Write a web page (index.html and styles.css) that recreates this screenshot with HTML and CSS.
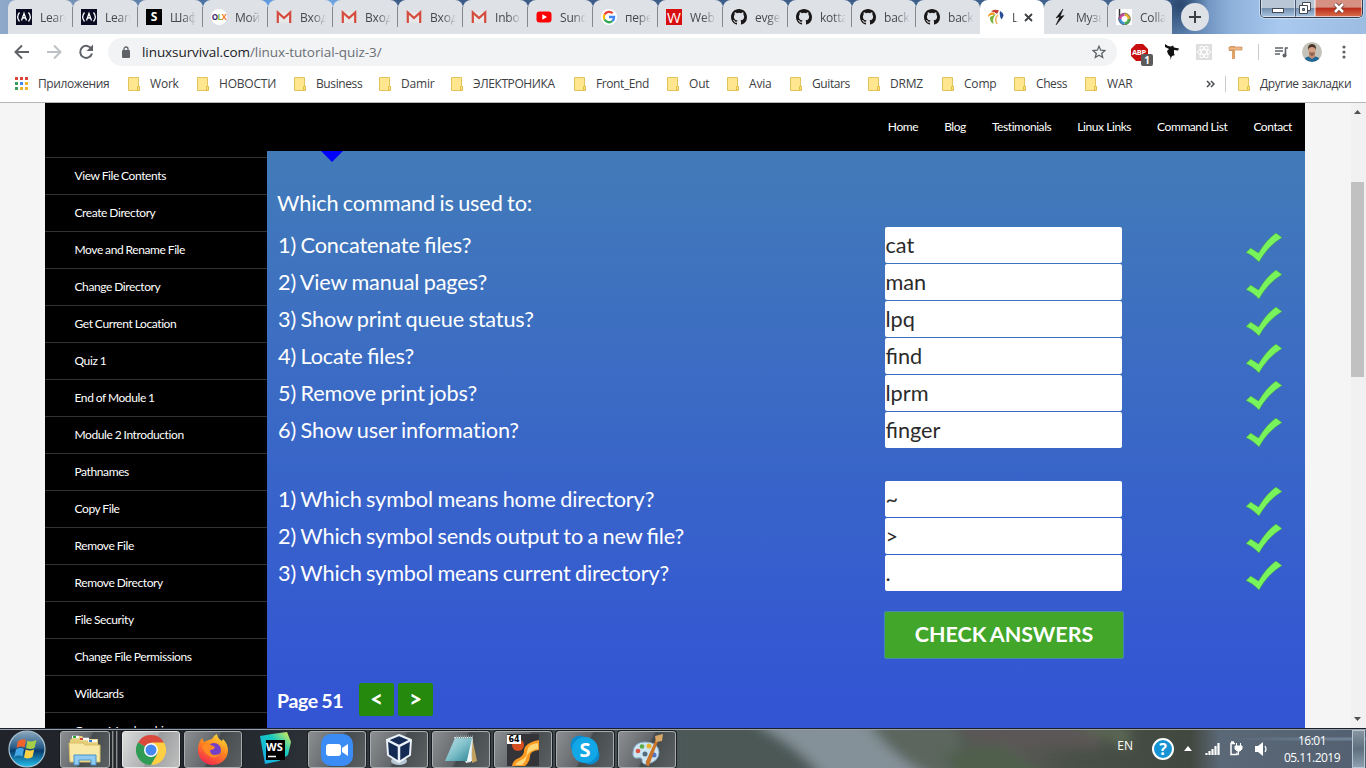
FILE: index.html
```html
<!DOCTYPE html>
<html lang="ru">
<head>
<meta charset="utf-8">
<title>Linux Survival</title>
<link rel="stylesheet" href="styles.css">
</head>
<body>
<svg width="0" height="0" class="defs">
  <defs>
    <linearGradient id="ff" x1="0.8" y1="0" x2="0.3" y2="1"><stop offset="0" stop-color="#ffdf3a"/><stop offset=".45" stop-color="#ff8a1e"/><stop offset="1" stop-color="#f5264f"/></linearGradient>
    <linearGradient id="orb" x1="0" y1="0" x2="0" y2="1"><stop offset="0" stop-color="#8fa9bd"/><stop offset=".45" stop-color="#2a5e8b"/><stop offset=".55" stop-color="#073b6c"/><stop offset="1" stop-color="#25c2ef"/></linearGradient>
    <linearGradient id="note" x1="0" y1="0" x2="1" y2="1"><stop offset="0" stop-color="#bfe3e8"/><stop offset=".5" stop-color="#7fc0ca"/><stop offset="1" stop-color="#2b8593"/></linearGradient>
    <linearGradient id="ws" x1="0" y1="1" x2="1" y2="0"><stop offset="0" stop-color="#18a8e8"/><stop offset=".6" stop-color="#14c9c2"/><stop offset="1" stop-color="#eaf04c"/></linearGradient>
    <filter id="soft" x="-20%" y="-50%" width="140%" height="200%"><feGaussianBlur stdDeviation="6"/></filter>
    <symbol id="fcc" viewBox="0 0 16 16"><rect width="16" height="16" fill="#0a0a23"/><path d="M3.500 3.500Q-.2 8 3.500 12.500M12.500 3.500Q16.200 8 12.500 12.500M5.500 11.500 8 4.500l2.500 7M8 8v2" fill="none" stroke="#fff" stroke-width="1.300"/></symbol>
    <symbol id="gmail" viewBox="0 0 16 16"><path d="M1 3h14v10.500H1z" fill="#e8e8e8"/><path d="M1.800 14V3.500L8 9l6.200-5.500V14" fill="none" stroke="#d54b3d" stroke-width="2.200"/></symbol>
    <symbol id="github" viewBox="0 0 16 16"><path fill="#191717" d="M8 0C3.580 0 0 3.580 0 8c0 3.540 2.290 6.530 5.470 7.590.4.070.55-.17.55-.38 0-.19-.01-.82-.01-1.490-2.010.37-2.530-.49-2.690-.94-.09-.23-.48-.94-.82-1.130-.28-.15-.68-.52-.01-.53.63-.01 1.080.58 1.230.82.72 1.210 1.870.87 2.330.66.07-.52.28-.87.51-1.070-1.780-.2-3.640-.89-3.640-3.950 0-.87.31-1.590.82-2.150-.08-.2-.36-1.020.08-2.120 0 0 .67-.21 2.200.82a7.600 7.600 0 0 1 4 0c1.530-1.040 2.200-.82 2.200-.82.44 1.100.16 1.920.08 2.120.51.56.82 1.270.82 2.150 0 3.070-1.870 3.750-3.650 3.950.29.25.54.73.54 1.480 0 1.070-.01 1.930-.01 2.200 0 .21.15.46.55.38A8 8 0 0 0 16 8c0-4.420-3.580-8-8-8z"/></symbol>
    <symbol id="folder" viewBox="0 0 12 14"><path d="M.5.500h10v9h1v4H.500z" fill="#ffe68f" stroke="#e3c35b"/><path d="M9.500 13v-3.500h2V13z" fill="#ffe68f" stroke="#e3bd45"/></symbol>
    <symbol id="check" viewBox="0 0 36 29"><path d="M0 19.500 4.700 15 12.500 20Q20 7 30 0l6 4.500Q22 13 13 29Q7 22.500 0 19.500z" fill="#79f35b" stroke="#3f9b43" stroke-width=".5"/></symbol>
  </defs>
</svg>

<header class="tabstrip">
  <div class="tab"><svg class="fav"><use href="#fcc"/></svg><span>Learn</span></div>
  <div class="tab"><svg class="fav"><use href="#fcc"/></svg><span>Learn</span></div>
  <div class="tab"><b class="fav fav-s">S</b><span>Шаф</span></div>
  <div class="tab"><b class="fav fav-olx"><i>O</i><em>L</em><u>X</u></b><span>Мой</span></div>
  <div class="tab"><svg class="fav"><use href="#gmail"/></svg><span>Вход</span></div>
  <div class="tab"><svg class="fav"><use href="#gmail"/></svg><span>Вход</span></div>
  <div class="tab"><svg class="fav"><use href="#gmail"/></svg><span>Вход</span></div>
  <div class="tab"><svg class="fav"><use href="#gmail"/></svg><span>Inbo</span></div>
  <div class="tab"><svg class="fav" viewBox="0 0 16 16"><rect y="2.500" x=".5" width="15" height="11" rx="3" fill="#f00"/><path d="M6.300 5.300v5.400L11 8z" fill="#fff"/></svg><span>Sund</span></div>
  <div class="tab"><svg class="fav" viewBox="0 0 16 16"><circle cx="8" cy="8" r="8" fill="#fff"/><g fill="none" stroke-width="2.300"><path d="M11.700 4.300A5.200 5.200 0 0 0 3.500 5.500" stroke="#ea4335"/><path d="M3.500 5.500a5.200 5.200 0 0 0 0 5" stroke="#fbbc05"/><path d="M3.500 10.500a5.200 5.200 0 0 0 7.800 1.600" stroke="#34a853"/><path d="M11.300 12.100A5 5 0 0 0 13.100 8H8" stroke="#4285f4"/></g></svg><span>пере</span></div>
  <div class="tab"><b class="fav fav-w">W</b><span>Web</span></div>
  <div class="tab"><svg class="fav"><use href="#github"/></svg><span>evge</span></div>
  <div class="tab narrow"><svg class="fav"><use href="#github"/></svg><span>kotta</span></div>
  <div class="tab narrow"><svg class="fav"><use href="#github"/></svg><span>back</span></div>
  <div class="tab narrow last"><svg class="fav"><use href="#github"/></svg><span>back</span></div>
  <div class="tab narrow active"><svg class="fav" viewBox="0 0 16 16"><path d="M0 8Q0 3 6 3.500L7 6Q3 5 0 8" fill="#f29b23"/><path d="M3 2.500Q6-.5 11 1.500L9 5Q7 2.500 3 2.500" fill="#c53b31"/><path d="M12 2q6 3 1.500 8.500Q11 7 12 2" fill="#294f9b"/><path d="M2 8l6-3q-4 4-2.500 10Q1.500 13 2 8" fill="#7ab43c"/><path d="M9 15q-3-6 1-9" fill="none" stroke="#efb25c" stroke-width="1.500"/></svg><span>L</span><svg class="close" viewBox="0 0 9 9"><path d="M1 1l7 7M8 1 1 8" stroke="#3c4043" stroke-width="1.800"/></svg></div>
  <div class="tab narrow"><svg class="fav" viewBox="0 0 16 16"><path d="M11 0 4 9l4-1.500L4 16l8-9.500-4 1z" fill="#111" stroke="#111" stroke-width=".5"/></svg><span>Музы</span></div>
  <div class="tab narrow last"><svg class="fav" viewBox="0 0 16 16"><rect width="16" height="16" fill="#fff"/><path d="M3.500 0v10" stroke="#333" stroke-width="1.500"/><g fill="none" stroke-width="3"><path d="M8.500 5.500a4.500 4.500 0 0 1 4.500 4.500" stroke="#e7b32d"/><path d="M13 10a4.500 4.500 0 0 1-4.500 4.500" stroke="#48b14e"/><path d="M8.500 14.500A4.500 4.500 0 0 1 4 10" stroke="#3d8fd4"/><path d="M4 10a4.500 4.500 0 0 1 4.500-4.500" stroke="#c64a9d"/></g><circle cx="8.500" cy="10" r="5.800" fill="none" stroke="#555" stroke-width=".7"/></svg><span>Colla</span></div>
  <div class="newtab"><svg width="12" height="12" viewBox="0 0 12 12"><path d="M6 0v12M0 6h12" stroke="#3c4043" stroke-width="2"/></svg></div>
  <div class="winbtns">
    <div class="min"><svg width="12" height="5"><rect x=".5" y=".5" width="11" height="4" fill="#fff" stroke="#434a55"/></svg></div>
    <div class="max"><svg width="12" height="12" viewBox="0 0 12 12"><path d="M3.500.500h8v8h-8z" fill="#fff" stroke="#434a55"/><path d="M.5 3.500h8v8h-8z" fill="#fff" stroke="#434a55"/><path d="M3.500 6.500h2v2h-2z" fill="#8da5c2" stroke="#434a55"/></svg></div>
    <div class="cls"><svg width="14" height="12"><path d="M3 2l8 8M11 2l-8 8" stroke="#6a302c" stroke-width="4.200"/><path d="M3 2l8 8M11 2l-8 8" stroke="#fff" stroke-width="2.600"/></svg></div>
  </div>
</header>

<nav class="toolbar">
  <svg class="nav" viewBox="0 0 16 16"><path d="M15 8H2M8 1.500 1.500 8 8 14.500" fill="none" stroke="#5f6368" stroke-width="2"/></svg>
  <svg class="nav" viewBox="0 0 16 16"><path d="M1 8h13M8 1.500 14.500 8 8 14.500" fill="none" stroke="#bdc1c6" stroke-width="2"/></svg>
  <svg class="nav" viewBox="0 0 16 16"><path d="M13.500 5A6 6 0 1 0 14 9.500" fill="none" stroke="#5f6368" stroke-width="2"/><path d="M15 .5V7H8.500z" fill="#5f6368"/></svg>
  <div class="omnibox">
    <svg width="8" height="12" viewBox="0 0 8 12"><rect y="4" width="8" height="8" rx="1" fill="#5f6368"/><path d="M2 5V3a2 2 0 0 1 4 0v2" fill="none" stroke="#5f6368" stroke-width="1.300"/></svg>
    <p class="url"><b>linuxsurvival.com</b>/linux-tutorial-quiz-3/</p>
    <svg width="14" height="14" viewBox="0 0 14 14"><path d="M7 1.300 8.700 5.200l4.200.4-3.200 2.800 1 4.100L7 10.300l-3.700 2.200 1-4.100L1.100 5.600l4.200-.4z" fill="none" stroke="#5f6368" stroke-width="1.300"/></svg>
  </div>
  <div class="ext abp"><svg width="17" height="17" viewBox="0 0 17 17"><path d="M5 0h7l5 5v7l-5 5H5l-5-5V5z" fill="#c70d0d"/></svg><b>ABP</b><span>1</span></div>
  <svg class="ext cat" viewBox="0 0 16 16"><path d="M1 0l3 2 3 .5 2-1 1 2 5 1-1 2-4-.5v4l1 1-3 1-2 4H6l.5-3L4 10 3 7 5 5 1 3z" fill="#111"/></svg>
  <svg class="ext react" viewBox="0 0 16 16"><rect width="16" height="16" fill="#dedede"/><g fill="none" stroke="#fff"><ellipse cx="8" cy="8" rx="6.500" ry="2.500"/><ellipse cx="8" cy="8" rx="6.500" ry="2.500" transform="rotate(60 8 8)"/><ellipse cx="8" cy="8" rx="6.500" ry="2.500" transform="rotate(120 8 8)"/></g></svg>
  <svg class="ext" viewBox="0 0 16 16"><path d="M3 2h4v13H4V7H1V3z" fill="#dfa269"/><path d="M1 3h13v3H1z" fill="#eeb986" stroke="#c17e47" stroke-width=".6"/></svg>
  <i class="vline"></i>
  <svg class="media" viewBox="0 0 14 12"><path d="M0 2h8M0 5h8M0 8h5M10.500 10V2H13" fill="none" stroke="#5f6368" stroke-width="1.600"/><circle cx="9.500" cy="9.500" r="2" fill="#5f6368"/></svg>
  <svg class="avatar" viewBox="0 0 20 20"><clipPath id="av"><circle cx="10" cy="10" r="10"/></clipPath><g clip-path="url(#av)"><path d="M0 0h20v20H0z" fill="#c5c2b9"/><path d="M1 20q1-6 9-6t9 6" fill="#216797"/><path d="M7 11h6v4l-3 2-3-2z" fill="#c68b73"/><ellipse cx="10" cy="8" rx="3.700" ry="5" fill="#d4a084"/><path d="M6 8q-.5-6 4-6t4 6q-1-3-4-3T6 8" fill="#4a3328"/><path d="M7 10q3 1 6 0-1 4-3 4t-3-4" fill="#8e634f"/></g></svg>
  <svg class="kebab" viewBox="0 0 4 14"><g fill="#5f6368"><circle cx="2" cy="2" r="1.600"/><circle cx="2" cy="7" r="1.600"/><circle cx="2" cy="12" r="1.600"/></g></svg>
</nav>

<nav class="bookmarks">
  <a class="apps cyr"><svg width="13" height="13" viewBox="0 0 13 13"><path d="M0 0h3v3H0zM5 0h3v3H5zM10 0h3v3h-3z" fill="#db4437"/><path d="M0 5h3v3H0zM0 10h3v3H0z" fill="#3a9e5d"/><path d="M5 5h3v3H5z" fill="#4285f4"/><path d="M10 5h3v3h-3zM5 10h3v3H5zM10 10h3v3h-3z" fill="#eeb42c"/></svg>Приложения</a>
  <a><svg class="fold"><use href="#folder"/></svg>Work</a>
  <a><svg class="fold"><use href="#folder"/></svg>НОВОСТИ</a>
  <a class="cyr"><svg class="fold"><use href="#folder"/></svg>Business</a>
  <a><svg class="fold"><use href="#folder"/></svg>Damir</a>
  <a class="cyr"><svg class="fold"><use href="#folder"/></svg>ЭЛЕКТРОНИКА</a>
  <a class="cyr"><svg class="fold"><use href="#folder"/></svg>Front_End</a>
  <a><svg class="fold"><use href="#folder"/></svg>Out</a>
  <a><svg class="fold"><use href="#folder"/></svg>Avia</a>
  <a class="cyr"><svg class="fold"><use href="#folder"/></svg>Guitars</a>
  <a><svg class="fold"><use href="#folder"/></svg>DRMZ</a>
  <a><svg class="fold"><use href="#folder"/></svg>Comp</a>
  <a class="cyr"><svg class="fold"><use href="#folder"/></svg>Chess</a>
  <a><svg class="fold"><use href="#folder"/></svg>WAR</a>
  <svg width="9" height="8" viewBox="0 0 9 8"><path d="M1 1l3 3-3 3M5 1l3 3-3 3" fill="none" stroke="#4a4d51" stroke-width="1.500"/></svg>
  <i class="vline"></i>
  <a class="cyr"><svg class="fold"><use href="#folder"/></svg>Другие закладки</a>
</nav>

<div class="viewport">
  <div class="site">
    <div class="topnav"><a>Home</a><a>Blog</a><a>Testimonials</a><a>Linux Links</a><a>Command List</a><a>Contact</a></div>
    <div class="body">
      <aside>
        <a>View File Contents</a><a>Create Directory</a><a>Move and Rename File</a><a>Change Directory</a><a>Get Current Location</a><a>Quiz 1</a><a>End of Module 1</a><a>Module 2 Introduction</a><a>Pathnames</a><a>Copy File</a><a>Remove File</a><a>Remove Directory</a><a>File Security</a><a>Change File Permissions</a><a>Wildcards</a><a>Group Membership</a>
      </aside>
      <main>
        <svg class="marker" width="22" height="11"><path d="M0 0h22L11 11z" fill="#00f"/></svg>
        <p class="lead">Which command is used to:</p>
        <div class="group">
          <div class="row"><span>1) Concatenate files?</span><div class="field">cat</div><svg class="check"><use href="#check"/></svg></div>
          <div class="row"><span>2) View manual pages?</span><div class="field">man</div><svg class="check"><use href="#check"/></svg></div>
          <div class="row"><span>3) Show print queue status?</span><div class="field">lpq</div><svg class="check"><use href="#check"/></svg></div>
          <div class="row"><span>4) Locate files?</span><div class="field">find</div><svg class="check"><use href="#check"/></svg></div>
          <div class="row"><span>5) Remove print jobs?</span><div class="field">lprm</div><svg class="check"><use href="#check"/></svg></div>
          <div class="row"><span class="plain">6) Show user information?</span><div class="field">finger</div><svg class="check"><use href="#check"/></svg></div>
        </div>
        <div class="group second">
          <div class="row"><span>1) Which symbol means home directory?</span><div class="field">~</div><svg class="check"><use href="#check"/></svg></div>
          <div class="row"><span>2) Which symbol sends output to a new file?</span><div class="field">&gt;</div><svg class="check"><use href="#check"/></svg></div>
          <div class="row"><span>3) Which symbol means current directory?</span><div class="field">.</div><svg class="check"><use href="#check"/></svg></div>
        </div>
        <div class="submit">CHECK ANSWERS</div>
        <div class="pager"><b>Page 51</b><i>&lt;</i><i>&gt;</i></div>
      </main>
    </div>
  </div>
  <div class="scroll">
    <svg width="7" height="4"><path d="M0 4 3.500 0 7 4z" fill="#505050"/></svg>
    <div class="thumb"></div>
    <svg width="7" height="4"><path d="M0 0h7L3.500 4z" fill="#505050"/></svg>
  </div>
</div>

<footer class="taskbar">
  <svg class="glass" width="1366" height="40"><g filter="url(#soft)"><path d="M676-10h90l80 60H676z" fill="#4c5856"/><path d="M750-10h110q20 30 80 60H825q-20-30-75-60z" fill="#849198"/><path d="M870-10h90v60h-20q-50-20-70-60z" fill="#5c665f"/><path d="M940-10h160v30l-120-8z" fill="#5b5656"/><path d="M940 25l60-10 60 40h-90z" fill="#4f5f4c"/><path d="M1070-5h60v25z" fill="#5a6653"/></g></svg>
  <svg class="orb" viewBox="0 0 38 38"><circle cx="19" cy="19" r="18" fill="url(#orb)" stroke="#a9c4d4" stroke-width="1.200"/><path d="M10 11q4-3 8-1l-1.500 7.500q-4-2-8 .5z" fill="#f0642b"/><path d="M19.500 10.500q4 2 9-.5L26.500 18q-4 2-8.500 0z" fill="#a4cf46"/><path d="M8 19.500q4-2.500 8-.5l-1.700 7.500q-4-2-8 .5z" fill="#45a6e5"/><path d="M17.700 19.500q4 2 8.500 0L24.500 27q-4.500 2.500-8.500.5z" fill="#fbd146"/></svg>
  <div class="task explorer"><svg width="34" height="32" viewBox="0 0 34 32"><path d="M2 6 7 2h7l2 3h14v21H2z" fill="#e6ce78"/><path d="M4 3h7M12 5h9M20 7h9" stroke="#fff" stroke-width="2.500"/><path d="M5 3h3" stroke="#2aa33c" stroke-width="2"/><path d="M12 5h3" stroke="#d8432d" stroke-width="2"/><path d="M21 7h3" stroke="#2f79cc" stroke-width="2"/><path d="M1 9h14l2 2h15v17H2z" fill="#f8e9a6" stroke="#d8bf67"/><path d="M6 31V21h22v10h-5v-5H11v5z" fill="#8fcaf0" stroke="#4b92c6"/></svg></div>
  <div class="stack"></div>
  <div class="task on"><svg width="30" height="30" viewBox="0 0 30 30"><path d="M15 15 2 7.500a15 15 0 0 1 26 0z" fill="#d94a3d"/><path d="M15 30A15 15 0 0 1 2 7.500L15 15l6.500 4z" fill="#2f9b55"/><path d="M15 7.500h13A15 15 0 0 1 15 30l7-12z" fill="#fdcf43"/><circle cx="15" cy="15" r="7" fill="#fff"/><circle cx="15" cy="15" r="5.500" fill="#4688f1"/></svg></div>
  <div class="task"><svg width="32" height="32" viewBox="0 0 32 32"><path d="M15 5q2-4 5-5 0 4 5 7l1-2q5 5 5 12A15 15 0 1 1 1 15Q1 9 5 4l2 4q4-2 8-3z" fill="url(#ff)"/><circle cx="17" cy="16" r="7" fill="#7440c8"/><path d="M5 12q5-4 9-1l4 2q-1 3-5 3 0 5 5 5 3 0 5-2-3 6-9 4-7-3-9-11z" fill="#ff8a24"/></svg></div>
  <div class="ws"><svg width="33" height="33" viewBox="0 0 33 33"><path d="M1 4 13 2l15-2 4 10-3 13-9 6-14 3z" fill="url(#ws)"/><path d="M7 8h19v20H7z" fill="#000"/><path d="M9 24.500h8" stroke="#fff" stroke-width="1.500"/></svg><b>WS</b></div>
  <div class="task"><svg width="32" height="32" viewBox="0 0 32 32"><rect width="32" height="32" rx="10" fill="#3b8cf5"/><rect x="5" y="10" width="15" height="12" rx="3" fill="#fff"/><path d="M21 14l6-4v12l-6-4z" fill="#fff"/></svg></div>
  <div class="task"><svg width="28" height="32" viewBox="0 0 28 32"><ellipse cx="14" cy="27" rx="8" ry="4" fill="#b5c5d4"/><path d="M14 1l12 5-1 15-11 7-11-7L2 6z" fill="#142b54" stroke="#eaf2f8" stroke-width="2"/><path d="M2 6l12 6 12-6M14 12v16" fill="none" stroke="#eaf2f8" stroke-width="2.500"/></svg></div>
  <div class="task"><svg width="32" height="32" viewBox="0 0 32 32"><path d="M27 3l5 24-5 2z" fill="#c5a260"/><path d="M9 3h19l-2 25-5 1z" fill="#dce9e9"/><path d="M10 4h17l-5 23H0z" fill="url(#note)"/><path d="M22 27l4-17 1 17z" fill="#eff6f7"/><path d="M11 3h17" stroke="#8e9b9b" stroke-width="3" stroke-dasharray="1 1"/></svg></div>
  <div class="task sixty"><svg width="32" height="32" viewBox="0 0 32 32"><rect width="32" height="32" fill="#343438"/><path d="M32 6v10q-9 1-9 6 0 6-5 10H5q1-6 7-8 5-3 5-7 0-8 15-11z" fill="#fa9a22"/><path d="M31 9q-11 1-11 9 0 6-6 8-4 2-6 5h7q3-3 4-6 1-5 4-7 4-3 8-3z" fill="#ffd879"/><circle cx="11" cy="11" r="6" fill="#d64f20"/></svg><b>64</b></div>
  <div class="task skype"><svg width="30" height="30" viewBox="0 0 30 30"><circle cx="10" cy="10" r="9.500" fill="#0b8bd0"/><circle cx="20" cy="20" r="9.500" fill="#0b8bd0"/><circle cx="15" cy="15" r="13" fill="#12a8e8"/></svg><b>S</b></div>
  <div class="task"><svg width="34" height="32" viewBox="0 0 34 32"><path d="M3 18Q4 8 15 8q13 0 14 10 0 9-11 12-5 1-6-2 1-5-4-4-6 1-5-6z" fill="#cde4f2" stroke="#86abc4"/><circle cx="8" cy="17" r="2.300" fill="#dc513e"/><circle cx="12" cy="12.500" r="2.300" fill="#5aad46"/><circle cx="19" cy="12" r="2.500" fill="#e8b42e"/><circle cx="15" cy="20" r="2.500" fill="#536d7e"/><circle cx="24" cy="21" r="2.500" fill="#5275c6"/><path d="M27 6 18 31l-1-3z" stroke="#c97529" stroke-width="2.500" fill="none"/><path d="M26 8 25 2l8-2-1 7z" fill="#d9a768"/></svg></div>
  <div class="tray">
    <span class="lang">EN</span>
    <b class="help">?</b>
    <svg width="8" height="5"><path d="M0 5 4 0l4 5z" fill="#fff"/></svg>
    <svg class="signal" width="16" height="13"><path d="M1.500 13v-2M4.500 13V9M7.500 13V7M10.500 13V4M13.500 13V1" stroke="#fff" stroke-width="2.200"/></svg>
    <svg class="power" width="14" height="15" viewBox="0 0 14 15"><path d="M6 2.500H2v11h6v-2M2 1h3" fill="none" stroke="#fff" stroke-width="1.500"/><path d="M6 5h7v3l-2 2H8L6 8zM7.500 2v3M11.500 2v3M9.500 10v4" fill="#fff" stroke="#fff"/></svg>
    <svg class="sound" width="13" height="14" viewBox="0 0 13 14"><path d="M0 4h3l5-4v14l-5-4H0z" fill="#fff"/><path d="M10 4q2 3 0 6" fill="none" stroke="#fff" stroke-width="1.200"/></svg>
    <div class="clock">16:01<br>05.11.2019</div>
    <div class="showdesk"></div>
  </div>
</footer>
</body>
</html>
```
FILE: styles.css
```css
* { box-sizing: border-box; margin: 0; padding: 0; }
body { width: 1366px; height: 768px; overflow: hidden; display: flex; flex-direction: column; background: #fff; font: 12px "Open Sans", sans-serif; color: #3c4043; }
svg { display: block; flex: none; }
.defs { position: absolute; }

/* tab strip */
.tabstrip { height: 34px; flex: none; display: flex; padding-left: 8px; background: radial-gradient(circle at 1180px 5px, #29476f 0, #29476f00 28px), linear-gradient(90deg, #8fa9cb 0, #7590b5 75px, #4a72a0 200px, #5e9be0 270px, #6ca2df 335px, #3b5a86 400px, #3d5f8b 980px, #45658e 1150px, #567ba8 1185px, #8db0da 1230px, #a9c9ef 1280px, #9dbce2 1366px); }
.tab { width: 65px; height: 34px; flex: none; display: flex; align-items: center; padding-left: 8px; background: #dee1e6; border-radius: 8px 8px 0 0; background-image: linear-gradient(#85888d, #85888d); background-size: 1px 20px; background-position: right 7px; background-repeat: no-repeat; }
.tab.narrow { width: 64px; }
.tab.last { background-image: none; }
.tab.active { background: #fff; }
.tab span { width: 26px; margin-left: 8px; overflow: hidden; white-space: nowrap; letter-spacing: -.2px; color: #45494d; -webkit-mask-image: linear-gradient(90deg, #000 50%, transparent); mask-image: linear-gradient(90deg, #000 50%, transparent); }
.tab.active span { width: 6px; }
.close { width: 9px; height: 9px; margin-left: 6px; }
.fav { width: 16px; height: 16px; flex: none; text-align: center; line-height: 16px; color: #fff; font-size: 12px; }
.fav-s { background: #000; }
.fav-w { background: #d90f0f; font-weight: 400; font-size: 15px; }
.fav-olx { border-radius: 50%; background: #fff; font-size: 8px; letter-spacing: -.5px; }
.fav-olx i { color: #3c2373; font-style: normal; }
.fav-olx em { color: #73b531; font-style: normal; }
.fav-olx u { color: #f07c20; text-decoration: none; }
.newtab { width: 28px; height: 28px; margin: 3px 0 0 9px; border-radius: 50%; background: #dee1e6; display: grid; place-items: center; }
.winbtns { display: flex; height: 18px; margin: 0 3px 0 auto; border: 1px solid #2b3c55; border-top: 0; border-radius: 0 0 5px 5px; overflow: hidden; box-shadow: 0 0 0 1px #ffffff66; }
.winbtns div { display: flex; align-items: center; justify-content: center; border: 1px solid #ffffff77; border-top: 0; background: linear-gradient(#b9c6d6 50%, #718baa 50%, #a4bfdc); }
.winbtns .min { width: 34px; padding-top: 4px; }
.winbtns .max { width: 20px; border-left-color: #405671; }
.winbtns .cls { width: 47px; background: linear-gradient(#d79183 45%, #bb2a18 50%, #d66b48); }

/* toolbar */
.toolbar { height: 36px; flex: none; display: flex; align-items: center; padding-left: 14px; background: #fff; }
.nav { width: 16px; height: 16px; margin-right: 16px; }
.omnibox { width: 1009px; height: 28px; margin-left: -2px; display: flex; align-items: center; padding: 0 11px 0 14px; border-radius: 14px; background: #f1f3f4; }
.url { flex: 1; margin-left: 12px; font-size: 13.500px; letter-spacing: -.07px; color: #6b6f74; }
.url b { font-weight: 400; color: #202124; }
.ext { width: 16px; height: 16px; margin-left: 16px; }
.abp { width: 17px; height: 17px; margin-left: 14px; position: relative; }
.abp b { position: absolute; left: 1px; top: 3px; font-size: 7.500px; line-height: 10px; color: #fff; letter-spacing: -.4px; }
.abp span { position: absolute; left: 10px; top: 10px; width: 12px; height: 12px; border-radius: 2px; background: #5b5b5b; color: #fff; font-size: 10px; font-weight: 700; line-height: 12px; text-align: center; }
.vline { width: 1px; height: 16px; background: #c8cacd; }
.toolbar .vline { margin-left: 14px; }
.media { width: 14px; height: 12px; margin-left: 16px; }
.avatar { width: 20px; height: 20px; margin-left: 13px; }
.kebab { width: 4px; height: 14px; margin-left: 20px; }

/* bookmarks */
.bookmarks { height: 33px; flex: none; display: grid; grid-template-columns: 113px 69px 97px 85px 72px 123px 93px 60px 63px 78px 74px 72px 71px 121px 19px 13px 110px; align-items: center; padding: 0 0 5px 15px; border-bottom: 1px solid #b6b6b6; }
.bookmarks a { display: flex; align-items: center; white-space: nowrap; letter-spacing: -.2px; }
.bookmarks .cyr { letter-spacing: -.4px; }
.fold { width: 12px; height: 14px; margin-right: 10px; }
.apps svg { margin-right: 10px; }

/* web page */
.viewport { height: 625px; flex: none; display: flex; justify-content: space-between; background: #f5f5f5; padding-left: 45px; font-family: Lato, sans-serif; overflow: hidden; }
.site { width: 1260px; color: #fff; }
.topnav { height: 48px; display: flex; justify-content: flex-end; align-items: center; gap: 26px; padding: 0 13px 2px 0; background: #000; font-size: 12px; letter-spacing: -.43px; }
.body { display: flex; height: 577px; }
aside { width: 222px; padding-top: 6px; background: #000; overflow: hidden; }
aside a { display: block; height: 37px; border-top: 1px solid #333; padding-left: 29.500px; line-height: 36px; font-size: 12px; letter-spacing: -.4px; word-spacing: -.4px; }
main { width: 1038px; padding-left: 10px; background: linear-gradient(#427bb8, #3b6bc4 40%, #3355d4 95%); font-size: 21.700px; letter-spacing: -.14px; word-spacing: -1px; font-feature-settings: "liga" 1; display: flex; flex-direction: column; }
.marker { margin-left: 44px; }
.lead { margin-top: 25px; height: 40px; line-height: 32px; }
.row { display: grid; grid-template-columns: 608px 361px 36px; height: 36px; margin-bottom: 1px; line-height: 36px; align-items: center; }
.row span { padding-left: 1px; }
.row .plain { font-feature-settings: "liga" 0; }
.field { width: 237px; height: 36px; padding-left: .5px; border-radius: 2px; background: #fff; color: #2b2b2b; letter-spacing: 0; }
.check { width: 36px; height: 29px; margin-top: 5px; }
.second { margin-top: 32px; }
.submit { width: 240px; height: 48px; margin: 19px 0 0 607px; border: 1px solid #4689a8; border-radius: 2px; background: #41a62a; text-align: center; line-height: 44px; font-size: 21.500px; font-weight: 700; letter-spacing: -.05px; }
.pager { display: flex; align-items: center; gap: 4px; margin-top: 24px; font-size: 19.500px; }
.pager b { width: 78px; padding-top: 2px; letter-spacing: -.35px; white-space: nowrap; }
.pager i { width: 35px; height: 33px; border-radius: 2px; background: #24890d; font: 900 22px/32px Lato, sans-serif; text-align: center; }
.scroll { width: 15px; background: #f1f1f1; display: flex; flex-direction: column; align-items: center; padding: 7px 2px 7px 0; }
.thumb { width: 13px; height: 195px; margin: 68px 0 auto; background: #c1c1c1; }

/* taskbar */
.taskbar { position: relative; height: 40px; flex: none; display: flex; align-items: center; padding-left: 8px; border-top: 1px solid #17202c; background: radial-gradient(ellipse at 1305px 45px, #1e1f24 20px, #1e1f2400 35px), radial-gradient(ellipse at 1350px 10px, #76899e, #61748900 120px), linear-gradient(90deg, #202329 0, #252a30 250px, #454f52 600px, #4f5a5d 760px, #778588 830px, #77858a 900px, #4d5a50 940px, #5a5957 1010px, #485047 1080px, #41483f 1190px, #5b6877 1220px, #526071); }
.glass { position: absolute; left: 0; top: 0; border-top: 1px solid #9a9fa5; }
.orb { width: 38px; height: 38px; position: relative; }
.task { width: 58px; height: 37px; flex: none; margin: 2px 4px 0 0; display: grid; place-items: center; border: 1px solid #a9adaf; border-radius: 3px; box-shadow: 0 0 0 1px #191c20; background: linear-gradient(115deg, #8c8f91, #62666a 48%, #454a4d 52%, #5b6063); position: relative; }
.task.on { background: linear-gradient(115deg, #dcdcdc, #adafb1 50%, #999b9d 52%, #bebfbf); border-color: #e8e8e8; }
.explorer { width: 50px; margin: 2px 0 0 14px; }
.stack { position: relative; width: 8px; height: 37px; margin: 2px 4px 0 0; background: repeating-linear-gradient(90deg, #25282b 0 2px, #8b8f91 2px 3px, #4b4f52 3px 4px); }
.ws { width: 66px; margin-left: -4px; display: grid; place-items: center; position: relative; }
.ws b { position: absolute; left: 24px; top: 8px; font: 700 11px/14px "Open Sans", sans-serif; color: #fff; }
.sixty b { position: absolute; left: 12px; top: 3px; width: 14px; background: #fff; color: #000; font: 700 8px/9px "DejaVu Sans", sans-serif; text-align: center; }
.skype b { position: absolute; left: 0; right: 0; top: 4px; text-align: center; font: 700 20px/28px "Open Sans", sans-serif; color: #fff; }
.tray { position: relative; margin-left: auto; height: 100%; display: flex; align-items: center; color: #fff; }
.lang { margin: -6px 19px 0 0; }
.help { width: 22px; height: 22px; margin-right: 10px; border: 2px solid #fff; border-radius: 50%; background: #1693d4; font-size: 16px; line-height: 18px; text-align: center; }
.signal { margin-left: 13px; }
.power { margin-left: 8px; }
.sound { margin-left: 12px; }
.clock { width: 62px; margin-left: 13px; text-align: center; line-height: 17px; letter-spacing: -.5px; white-space: nowrap; }
.showdesk { width: 13px; height: 38px; margin: 1px 1px 0 9px; border: 1px solid #b9c7d2; background: linear-gradient(#8795a2, #5f6e7c 50%, #8ca0b0); }
```
